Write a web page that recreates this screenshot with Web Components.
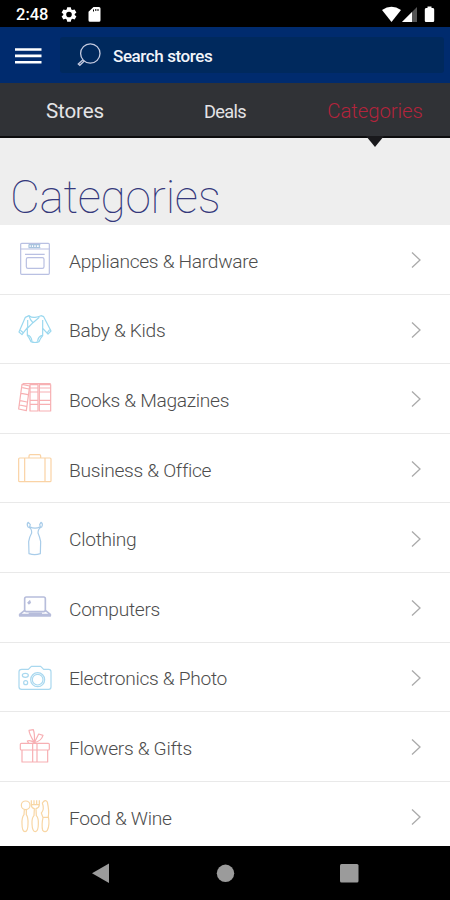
<!DOCTYPE html>
<html lang="en">
<head>
<meta charset="utf-8">
<title>Categories</title>
<style>
    html, body {
        margin: 0;
        height: 900px;
        overflow: hidden;
        background: #000;
        font-family: Roboto, "Noto Sans", sans-serif;
    }
</style>
</head>
<body>
<mall-app>
    <status-bar slot="top">2:48</status-bar>
    <search-header slot="top">Search stores</search-header>
    <tab-strip slot="top">
        <tab-item style="--size:20.6px">Stores</tab-item>
        <tab-item style="--size:18.2px; --spacing:-0.7px">Deals</tab-item>
        <tab-item selected style="--size:20.4px">Categories</tab-item>
    </tab-strip>
    <page-title slot="top">Categories</page-title>
    <category-row icon="oven">Appliances &amp; Hardware</category-row>
    <category-row icon="baby">Baby &amp; Kids</category-row>
    <category-row icon="books">Books &amp; Magazines</category-row>
    <category-row icon="case">Business &amp; Office</category-row>
    <category-row icon="dress">Clothing</category-row>
    <category-row icon="laptop">Computers</category-row>
    <category-row icon="camera">Electronics &amp; Photo</category-row>
    <category-row icon="gift">Flowers &amp; Gifts</category-row>
    <category-row icon="cutlery">Food &amp; Wine</category-row>
    <nav-bar slot="bottom"></nav-bar>
</mall-app>

<script>
(function() {
    // Line icons, drawn on a 180 unit square
    const ICONS = {
        oven: ['#b9c0e2', `
            <rect x="32" y="40" width="86" height="93" rx="3"/>
            <path d="M32 57H118M45 73H104"/>
            <rect x="49" y="83" width="53" height="32" rx="5"/>
            <path stroke="#a9c4df" d="M57 44V53M64 44V53M71 44V53M79 44V53M88 44V53M56 44H91M56 53H91"/>`],
        baby: ['#9bd8ef', `
            <path d="M57 47Q65 53 75 52T93 47L101 50 123 93 114 102 98 85V107Q91 115 87 125 75 130 63 125 58 113 52 106V83L36 104 27 96 46 52Z"/>
            <path d="M57 47Q60 61 69 68L88 52M69 68L53 84M53 60V84M98 60V86M53 105Q64 108 66 124M97 106Q84 109 83 124M111 99L119 89M31 91L40 98"/>`],
        books: ['#f7b0b3', `
            <path d="M36 46L59 51 49 125 26 120ZM37 56L57 60M34 73L54 77M31 95L51 99M29 108L49 112"/>
            <path d="M60 47H84V126H60ZM60 57H84M60 69H84M60 94H84M60 106H84"/>
            <path d="M88 47H122V126H88ZM88 57H122M88 69H122M88 94H122M88 106H122M38 44H122"/>`],
        case: ['#fad3a5', `
            <rect x="26" y="57" width="97" height="71" rx="3"/>
            <path d="M44 57V128M105 57V128M57 57V51Q57 47 61 47H88Q92 47 92 51V57"/>`],
        dress: ['#a8cce9', `
            <path d="M55 40Q49 45 54 54 66 57 65 72 58 84 56 98L57 134Q74 140 91 134L92 98Q89 83 84 72 84 58 95 54 100 45 93 40L89 47 91 53Q75 62 59 53L61 47Z"/>`],
        laptop: ['#b7bddb', `
            <rect x="44" y="57" width="62" height="44" rx="5" stroke-width="5"/>
            <path d="M43 98L29 109V114H121V109L107 98M31 110H121M56 106H96M64 111H86M53 76L61 68M55 78L62 72" stroke-width="5"/>`],
        camera: ['#a9d8ef', `
            <path d="M35 64H55L64 55H92L101 64H116Q123 64 123 71V117Q123 124 116 124H35Q27 124 27 117V71Q27 64 35 64Z"/>
            <circle cx="83" cy="95" r="21"/><circle cx="83" cy="95" r="16"/>
            <ellipse cx="46" cy="82" rx="9" ry="6"/><circle cx="47" cy="104" r="6"/>`],
        gift: ['#f7afb3', `
            <rect x="31" y="79" width="87" height="20" rx="3"/>
            <path d="M36 99V135H113V99M68 79V135M81 79V135"/>
            <path d="M73 77Q57 50 57 40L70 38Q75 51 73 77L86 51 99 55Q94 72 73 77 60 68 52 72L56 79"/>`],
        cutlery: ['#f8d6a4', `
            <circle cx="47" cy="55" r="13"/>
            <path d="M43 68L42 83Q35 92 36 110 36 133 45 134 54 133 54 110 55 92 49 83V68"/>
            <path d="M64 40V53Q64 63 73 65L72 86Q65 93 66 111 67 134 76 134 85 133 85 111 86 93 79 86L78 65Q88 62 88 53V40M72 40V54M80 40V54M64 53H88"/>
            <path d="M97 48Q106 35 112 45 118 73 115 88 120 114 112 130 105 138 98 130 94 114 99 92L94 78Q104 67 97 48ZM99 91H114"/>`]
    };

    // Registers an element whose shadow root is cloned from a template
    function define(name, html, setup) {
        const template = document.createElement('template');
        template.innerHTML = html;
        window.customElements.define(name, class extends HTMLElement {
            constructor() {
                super();
                this.attachShadow({mode: 'open'});
                this.shadowRoot.appendChild(template.content.cloneNode(true));
            }

            connectedCallback() {
                if (setup) {
                    setup(this, this.shadowRoot);
                }
            }
        });
    }

    define('mall-app', `
        <style>
            :host {
                display: flex;
                flex-direction: column;
                width: 450px;
                height: 900px;
                overflow: hidden;
                background: #fff;
            }
            main {
                flex: 1;
                min-height: 0;
                overflow: hidden;
            }
        </style>
        <slot name="top"></slot>
        <main><slot></slot></main>
        <slot name="bottom"></slot>
    `);

    define('status-bar', `
        <style>
            :host {
                display: flex;
                align-items: center;
                flex: none;
                box-sizing: border-box;
                height: 27px;
                padding: 2px 14px 0 16px;
                background: #000;
                color: #fff;
                font-size: 16.5px;
                font-weight: 500;
            }
            span { width: 45px; }
            svg { display: block; fill: #fff; }
            .right { margin-left: auto; }
        </style>
        <span><slot></slot></span>
        <svg width="42" height="18" viewBox="0 0 42 18">
            <path fill-rule="evenodd" d="M6.200 1.200h3.600l.5 2.200 1.200.7 2.100-.7 1.800 3-1.700 1.500v1.100l1.700 1.500-1.800 3-2.100-.7-1.200.7-.5 2.200H6.200l-.5-2.200-1.200-.7-2.100.7-1.800-3 1.700-1.500V7.900L.6 6.400l1.800-3 2.100.7 1.200-.7zM8 5.700a2.800 2.800 0 1 0 0 5.600 2.800 2.800 0 1 0 0-5.600"/>
            <path fill-rule="evenodd" d="M32.500 .9H38Q39.500 .9 39.500 2.400V14.200Q39.500 15.700 38 15.700H29Q27.500 15.700 27.500 14.200V5.700ZM32 3.500V5.500H33V3.500ZM34.300 3V5H35.300V3ZM36.500 3V5H37.500V3Z"/>
        </svg>
        <svg class="right" width="54" height="18" viewBox="0 0 54 18">
            <path d="M0 4Q9.500-2.500 19 4L9.500 16Z"/>
            <path d="M35 1V16H20Z" fill="#555"/>
            <path d="M30 6V16H20Z"/>
            <path d="M45.500 2V.5H49.500V2H51Q52.200 2 52.200 3.500V14.800Q52.200 16 51 16H44Q42.800 16 42.800 14.800V3.500Q42.800 2 44 2Z"/>
        </svg>
    `);

    define('search-header', `
        <style>
            :host {
                display: flex;
                align-items: center;
                gap: 18px;
                flex: none;
                box-sizing: border-box;
                height: 56px;
                padding: 0 6px 0 15px;
                background: #002b6e;
            }
            svg { display: block; flex: none; }
            .field {
                display: flex;
                align-items: center;
                flex: 1;
                box-sizing: border-box;
                height: 36px;
                padding-left: 17px;
                border-radius: 3px;
                background: #00295d;
                color: #f2f5fa;
                font-size: 17px;
                font-weight: 500;
                letter-spacing: -0.4px;
            }
            .field span { margin: 2px 0 0 10px; }
        </style>
        <svg width="27" height="18" viewBox="0 0 27 18">
            <path d="M0 3.500H26.500M0 9.900H26.500M0 16.300H26.500" stroke="#fff" stroke-width="2.600"/>
        </svg>
        <div class="field">
            <svg width="26" height="26" viewBox="0 0 26 26" fill="none" stroke="#c5cbe0" stroke-width="1.300">
                <circle cx="13.300" cy="11.500" r="9.700"/>
                <path d="M7.500 18.800L2.800 23.300L1.300 22L6 17.800"/>
            </svg>
            <span><slot></slot></span>
        </div>
    `);

    define('tab-strip', `
        <style>
            :host {
                display: grid;
                grid-template-columns: repeat(3, 1fr);
                flex: none;
                box-sizing: border-box;
                height: 55px;
                background: #303236;
                border-bottom: 2px solid #0c0c0e;
            }
        </style>
        <slot></slot>
    `);

    define('tab-item', `
        <style>
            :host {
                display: flex;
                align-items: center;
                justify-content: center;
                position: relative;
                padding-top: 3px;
                color: #e4e4e6;
                font-size: var(--size);
                letter-spacing: var(--spacing, -0.1px);
            }
            :host([selected]) {
                color: #b3243c;
                font-weight: 300;
            }
            svg { display: none; }
            :host([selected]) svg {
                display: block;
                position: absolute;
                top: 100%;
                left: calc(50% - 9px);
            }
        </style>
        <slot></slot>
        <svg width="18" height="11" viewBox="0 0 18 11"><path d="M0 0H18L9 11Z" fill="#19191c"/></svg>
    `);

    define('page-title', `
        <style>
            :host {
                display: block;
                flex: none;
                box-sizing: border-box;
                height: 87px;
                padding: 34px 0 0 10px;
                background: #eee;
                color: #35397c;
                font-size: 46px;
                font-weight: 100;
                letter-spacing: -0.3px;
                line-height: 50px;
            }
        </style>
        <slot></slot>
    `);

    define('category-row', `
        <style>
            :host {
                display: flex;
                align-items: center;
                box-sizing: border-box;
                height: 69.600px;
                padding: 2px 28px 0 10px;
                border-bottom: 1px solid #e9e9e9;
                background: #fff;
                color: #4d4d4d;
                font-size: 19.200px;
                font-weight: 300;
                letter-spacing: -0.3px;
            }
            svg {
                display: block;
                flex: none;
                fill: none;
            }
            .icon {
                width: 60px;
                height: 60px;
                stroke-width: 3.600;
                stroke-linejoin: round;
            }
            span {
                flex: 1;
                margin-left: -1px;
                padding-top: 2px;
            }
        </style>
        <svg class="icon" viewBox="0 0 180 180"></svg>
        <span><slot></slot></span>
        <svg width="12" height="18" viewBox="0 0 12 18"><path d="M2 1.500L10 9L2 16.500" stroke="#aaa" stroke-width="1.300"/></svg>
    `, function(host, root) {
        const [color, paths] = ICONS[host.getAttribute('icon')];
        const icon = root.querySelector('.icon');
        icon.setAttribute('stroke', color);
        icon.innerHTML = paths;
    });

    define('nav-bar', `
        <style>
            :host {
                display: block;
                flex: none;
                height: 54px;
                background: #000;
            }
            svg { display: block; }
        </style>
        <svg width="450" height="54" viewBox="0 0 450 54" fill="#9b9b9b">
            <path d="M92 27.300L109 17.500V37Z"/>
            <circle cx="225.500" cy="27.300" r="8.700"/>
            <rect x="340" y="18" width="18.500" height="18.500" rx="1.500"/>
        </svg>
    `);
})();
</script>
</body>
</html>
